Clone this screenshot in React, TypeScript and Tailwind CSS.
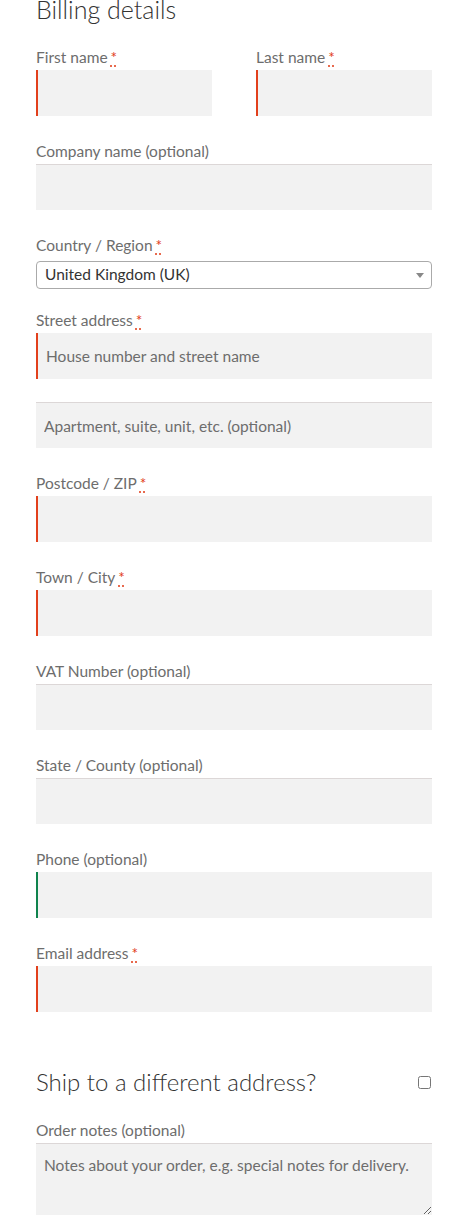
import { ReactNode } from 'react'

const font = { fontFamily: 'Lato, "Liberation Sans", sans-serif' }

function Required() {
  return (
    <abbr
      title="required"
      className="ml-[3px] text-[#e2401c] underline decoration-dotted underline-offset-[3px]"
    >
      *
    </abbr>
  )
}

function Label({ children, required }: { children: ReactNode; required?: boolean }) {
  return (
    <label className="block h-[26px] text-[15.5px] leading-[26px] text-[#6d6d6d]">
      {children}
      {required && <Required />}
    </label>
  )
}

type Status = 'required' | 'valid' | 'none'

function TextInput({ status = 'none', placeholder }: { status?: Status; placeholder?: string }) {
  const border =
    status === 'required'
      ? 'border-l-2 border-l-[#e2401c]'
      : status === 'valid'
        ? 'border-l-2 border-l-[#0f834d]'
        : 'border-t border-t-[#dcd7d7]'
  return (
    <input
      type="text"
      placeholder={placeholder}
      className={`block h-[46px] w-full bg-[#f2f2f2] px-[8px] text-[15.5px] text-[#43454b] outline-none placeholder:text-[#6d6d6d] ${border}`}
      style={font}
    />
  )
}

function Field({
  label,
  required,
  status,
  placeholder,
}: {
  label?: string
  required?: boolean
  status?: Status
  placeholder?: string
}) {
  return (
    <div className="mb-[22px]">
      {label && <Label required={required}>{label}</Label>}
      <TextInput status={status} placeholder={placeholder} />
    </div>
  )
}

export default function App() {
  return (
    <div className="min-h-[1229px] bg-white pl-[36px] pr-[35px]" style={font}>
      <h3 className="-mt-[7px] mb-[19px] text-[25px] font-light leading-[32px] text-[#333333]">
        Billing details
      </h3>

      <div className="mb-[22px] flex gap-[44px]">
        <div className="flex-1">
          <Label required>First name</Label>
          <TextInput status="required" />
        </div>
        <div className="flex-1">
          <Label required>Last name</Label>
          <TextInput status="required" />
        </div>
      </div>

      <Field label="Company name (optional)" />

      <div className="mb-[18px]">
        <Label required>Country / Region</Label>
        <div className="relative mt-[3px] flex h-[28px] items-center rounded-[4px] border border-[#aaaaaa] pl-[8px] text-[15.5px] text-[#333333]">
          United Kingdom (UK)
          <span className="absolute right-[7px] top-[11px] h-0 w-0 border-x-[4px] border-t-[5px] border-x-transparent border-t-[#888888]" />
        </div>
      </div>

      <div className="mb-[23px]">
        <Label required>Street address</Label>
        <TextInput status="required" placeholder="House number and street name" />
      </div>
      <Field placeholder="Apartment, suite, unit, etc. (optional)" />

      <Field label="Postcode / ZIP" required status="required" />
      <Field label="Town / City" required status="required" />
      <Field label="VAT Number (optional)" />
      <Field label="State / County (optional)" />
      <Field label="Phone (optional)" status="valid" />
      <Field label="Email address" required status="required" />

      <div className="mt-[54px] flex items-center justify-between">
        <h3 className="text-[24px] font-light leading-[32px] text-[#333333]">
          Ship to a different address?
        </h3>
        <input type="checkbox" className="mr-[1px] h-[13px] w-[13px]" />
      </div>

      <div className="mt-[19px]">
        <Label>Order notes (optional)</Label>
        <textarea
          placeholder="Notes about your order, e.g. special notes for delivery."
          className="block h-[72px] w-full border-t border-t-[#dcd7d7] bg-[#f2f2f2] px-[8px] py-[10px] text-[15.5px] outline-none placeholder:text-[#6d6d6d]"
          style={font}
        />
      </div>
    </div>
  )
}
